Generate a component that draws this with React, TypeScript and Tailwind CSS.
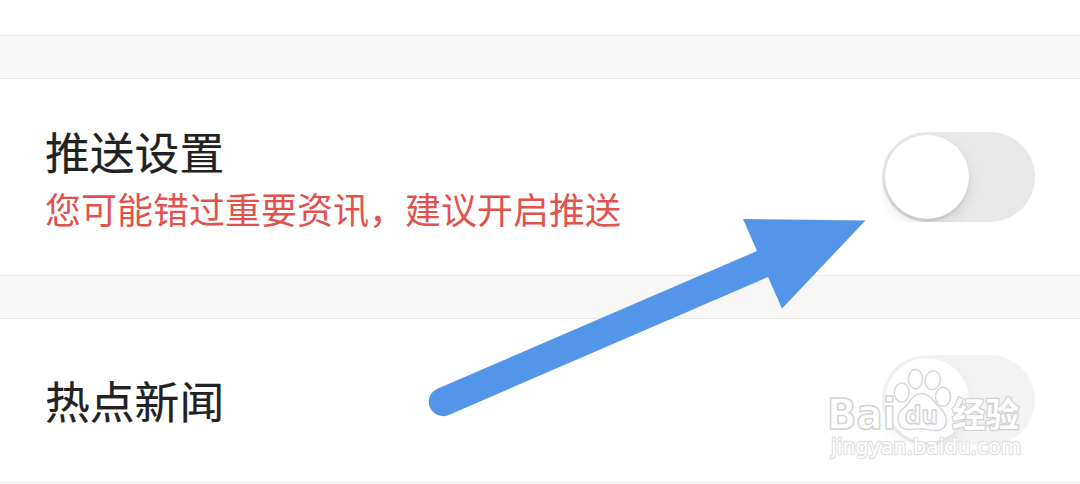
function Toggle({ disabled = false }: { disabled?: boolean }) {
  return (
    <div
      role="switch"
      aria-checked={false}
      aria-disabled={disabled}
      className={`h-[90px] w-[153px] shrink-0 overflow-hidden ${disabled ? 'mb-0.5 opacity-50' : ''}`}
    >
      <div className="h-full w-full rounded-full bg-[#e8e8e8] p-[3px]">
        <div className="size-[84px] rounded-full bg-white shadow-[0_6px_14px_rgba(0,0,0,0.09),0_3px_2px_rgba(0,0,0,0.08)]" />
      </div>
    </div>
  );
}

function Divider() {
  return <div className="h-11 shrink-0 border-y border-[#e9e9e9] bg-[#f7f7f7]" />;
}

function Arrow() {
  return (
    <svg className="pointer-events-none absolute inset-0" width="1080" height="484" viewBox="0 0 1080 484" fill="#5295e9">
      <path d="M865.5 220.5L743 219L757 251L437.3 388.7A14.3 14.3 0 0 0 448.8 414.9L768 277L782 308.5Z" />
    </svg>
  );
}

function Watermark() {
  return (
    <svg className="pointer-events-none absolute inset-0" width="1080" height="484" viewBox="0 0 1080 484">
      <g fill="#fff" stroke="#d6d6d6" strokeWidth="1.4" strokeLinejoin="round">
        <ellipse cx="901.7" cy="392.5" rx="7.4" ry="9.6" />
        <ellipse cx="915.5" cy="379" rx="7" ry="9.7" />
        <ellipse cx="932.7" cy="380.2" rx="7.5" ry="9.5" transform="rotate(12 932.7 380.2)" />
        <ellipse cx="943" cy="396.7" rx="7.5" ry="9.5" />
        <path d="M921.5 393.5C914 393.5 911 400 907.5 404.5C903.5 409 897.5 411.5 898 419.5C898.5 427 903.5 430 909.5 429.5C915 429 918 428.5 922 428.7C928 429 931 431 937 430.5C943 430 946.5 426 946.5 420C946.5 413 941 409.5 937.5 405.5C933 400.5 929.5 393.5 921.5 393.5Z" />
      </g>
      <g fill="#fff" stroke="#d2d2d2" strokeLinejoin="round">
        <text x="827" y="428.5" fontSize="42" fontWeight="700" strokeWidth="1.5" textLength="69" lengthAdjust="spacingAndGlyphs" className="font-['DejaVu_Sans',sans-serif]">Bai</text>
        <text x="905" y="423.5" fontSize="25" fontWeight="700" strokeWidth="1.4" textLength="33" lengthAdjust="spacingAndGlyphs" className="font-['DejaVu_Sans',sans-serif]">du</text>
        <text x="952" y="426.5" fontSize="34" fontWeight="700" strokeWidth="2.6" paintOrder="stroke" textLength="67" lengthAdjust="spacingAndGlyphs" className="font-['Noto_Sans_CJK_SC',sans-serif]">经验</text>
      </g>
      <text x="831" y="454" fontSize="21" textLength="190" lengthAdjust="spacingAndGlyphs" fill="#fff" stroke="#e0e0e0" strokeWidth="2.4" strokeLinejoin="round" paintOrder="stroke" className="font-['DejaVu_Sans',sans-serif]">jingyan.baidu.com</text>
    </svg>
  );
}

export default function App() {
  return (
    <main className="relative flex h-[484px] w-[1080px] flex-col overflow-hidden bg-white font-['Noto_Sans_CJK_SC',sans-serif] text-[#222]">
      <div className="h-[35px] shrink-0" />
      <Divider />
      <section className="flex h-[196px] shrink-0 items-center justify-between px-[45px]">
        <div>
          <h2 className="text-[44.8px] leading-[60px] [-webkit-text-stroke:0.2px_#222]">推送设置</h2>
          <p className="pt-[3px] text-[36px] leading-[49px] text-[#e2514b]">您可能错过重要资讯，建议开启推送</p>
        </div>
        <Toggle />
      </section>
      <Divider />
      <section className="flex h-[164px] shrink-0 items-center justify-between border-b border-[#e9e9e9] px-[45px]">
        <h2 className="pb-px text-[44.8px] leading-[60px] [-webkit-text-stroke:0.2px_#222]">热点新闻</h2>
        <Toggle disabled />
      </section>
      <Arrow />
      <Watermark />
    </main>
  );
}
